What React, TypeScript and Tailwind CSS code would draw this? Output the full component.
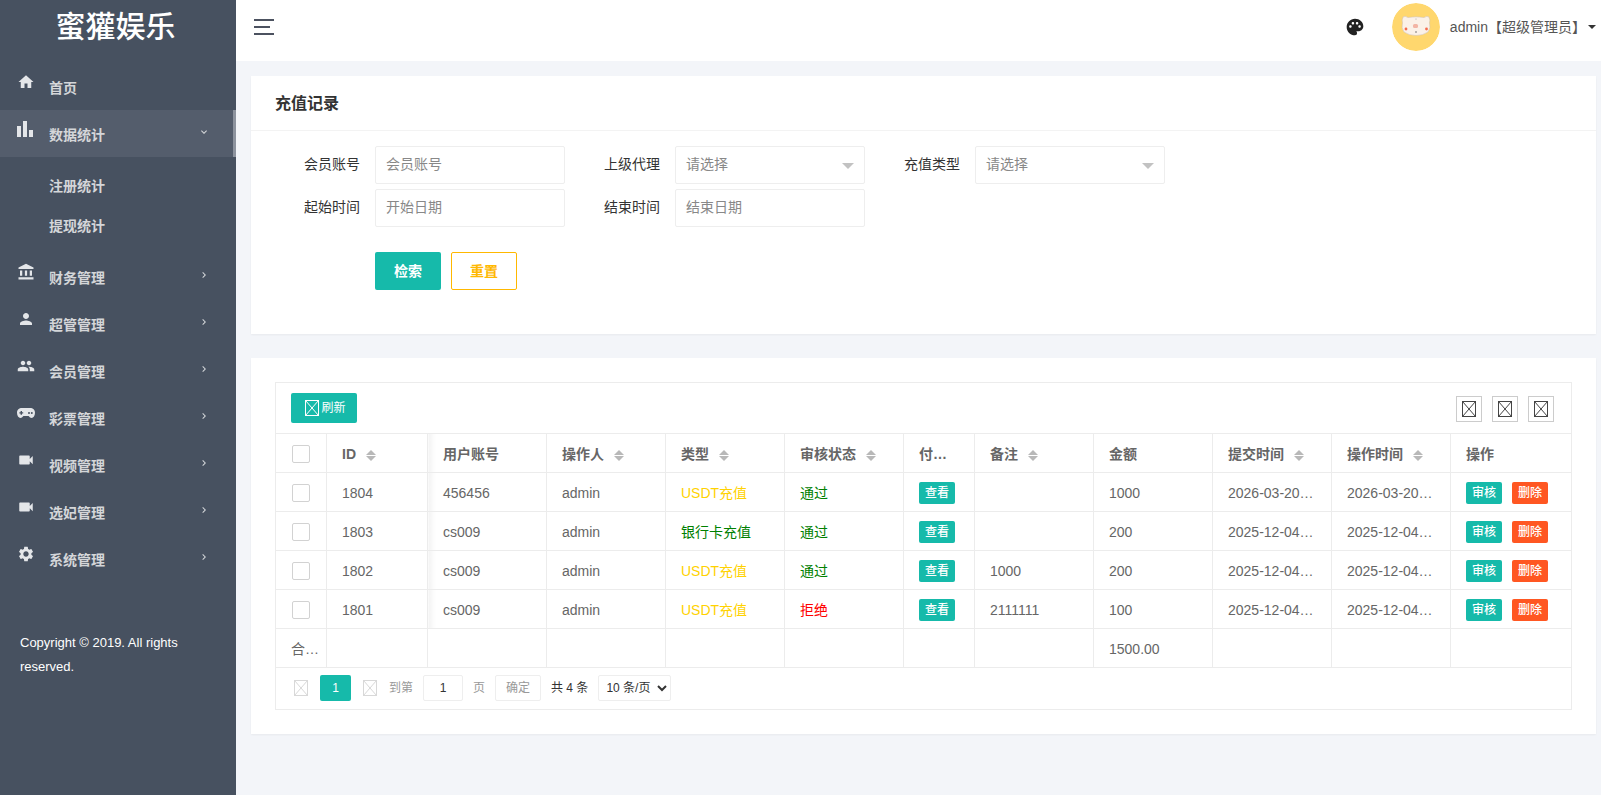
import {
  MdHome,
  MdBarChart,
  MdAccountBalance,
  MdPerson,
  MdPeople,
  MdVideocam,
  MdSettings,
  MdPalette,
  MdKeyboardArrowRight,
  MdKeyboardArrowDown,
} from "react-icons/md";

const font = "font-['Liberation_Sans','Noto_Sans_CJK_SC',sans-serif]";

// broken-image placeholder as the browser draws it
function BrokenImg({ className = "" }: { className?: string }) {
  return (
    <svg viewBox="0 0 14 16" className={`w-[14px] h-[16px] ${className}`} fill="none" stroke="currentColor" strokeWidth="1">
      <rect x="0.5" y="0.5" width="13" height="15" />
      <path d="M0.5 0.5 L13.5 15.5 M13.5 0.5 L0.5 15.5" />
    </svg>
  );
}

function Pig() {
  return (
    <svg viewBox="0 0 48 48" className="w-12 h-12 rounded-full">
      <circle cx="24" cy="24" r="24" fill="#ffd76e" />
      <path
        d="M11 14 Q13 12.5 16 14.5 Q24 13 32 14.5 Q35 12.5 37 14 Q38.5 17 37.5 20 Q39 25 36 29 Q31 32.5 24 32.5 Q17 32.5 12 29 Q9 25 10.5 20 Q9.5 17 11 14Z"
        fill="#fbf1e8"
        stroke="#cdbfb0"
        strokeWidth="0.5"
      />
      <rect x="21" y="21" width="5" height="4" rx="1.5" fill="#f3b5a5" />
      <circle cx="14" cy="26" r="1.4" fill="#f56b4e" />
      <circle cx="34.5" cy="26" r="1.4" fill="#f56b4e" />
      <circle cx="24" cy="29" r="0.8" fill="#666" />
      <circle cx="24" cy="16" r="0.5" fill="#999" />
    </svg>
  );
}

function GamepadIcon() {
  return (
    <svg viewBox="0 0 18 10" className="w-[18px] h-[10px] block" fill="currentColor">
      <path
        fillRule="evenodd"
        d="M5 0 H13 C16 0 18 2 18 4.8 C18 7.8 16.4 10 14.6 10 C13.4 10 12.6 9 11.6 8 H6.4 C5.4 9 4.6 10 3.4 10 C1.6 10 0 7.8 0 4.8 C0 2 2 0 5 0Z M3.6 3 H5 V4.2 H6.2 V5.6 H5 V6.8 H3.6 V5.6 H2.4 V4.2 H3.6Z M12 4 A1 1 0 1 0 12 6 A1 1 0 1 0 12 4Z M14.8 4 A1 1 0 1 0 14.8 6 A1 1 0 1 0 14.8 4Z"
      />
    </svg>
  );
}

function MenuItem({ icon, label, open, active, noArrow }: { icon: React.ReactNode; label: string; open?: boolean; active?: boolean; noArrow?: boolean }) {
  return (
    <div className={`relative h-[47px] pt-[2px] flex items-center pl-[17px] pr-[26px] ${active ? "bg-[#545d6c]" : ""}`}>
      <span className="w-[32px] text-[18px] -mt-[12px] text-[#e4e6e9]">{icon}</span>
      <span className="flex-1 text-sm font-bold text-[#d4d6d9]">{label}</span>
      {!noArrow && <span className="-mt-[6px] text-[#d4d6d9] text-[12px]">{open ? <MdKeyboardArrowDown /> : <MdKeyboardArrowRight />}</span>}
      {active && <span className="absolute right-0 top-0 bottom-0 w-[3px] bg-[#8d939e]" />}
    </div>
  );
}

function Sidebar() {
  return (
    <aside className="w-[236px] shrink-0 bg-[#475160]">
      <div className="h-[63px] pb-[9px] pr-[5px] flex items-center justify-center text-[30px] leading-none font-medium text-white">蜜獾娱乐</div>
      <MenuItem icon={<MdHome />} label="首页" noArrow />
      <MenuItem icon={<MdBarChart className="text-[24px] -ml-[4px]" />} label="数据统计" open active />
      <div className="pt-[9px] pb-[7px]">
        <div className="h-10 pl-[49px] flex items-center text-sm font-bold text-[#d4d6d9]">注册统计</div>
        <div className="h-10 pl-[49px] flex items-center text-sm font-bold text-[#d4d6d9]">提现统计</div>
      </div>
      <MenuItem icon={<MdAccountBalance />} label="财务管理" />
      <MenuItem icon={<MdPerson />} label="超管管理" />
      <MenuItem icon={<MdPeople />} label="会员管理" />
      <MenuItem icon={<GamepadIcon />} label="彩票管理" />
      <MenuItem icon={<MdVideocam />} label="视频管理" />
      <MenuItem icon={<MdVideocam />} label="选妃管理" />
      <MenuItem icon={<MdSettings />} label="系统管理" />
      <p className="mt-[49px] px-5 text-[13px] leading-6 text-white">Copyright © 2019. All rights reserved.</p>
    </aside>
  );
}

function Field({ label, placeholder, select }: { label: string; placeholder: string; select?: boolean }) {
  return (
    <div className="flex items-center w-[300px]">
      <label className="w-[110px] pr-[15px] pb-[2px] text-right text-sm text-[#333]">{label}</label>
      <div className="relative w-[190px] h-[38px] pb-[2px] rounded-[2px] border border-[#eeeeee] flex items-center pl-[10px] text-sm text-[#888]">
        {placeholder}
        {select && <span className="absolute right-[10px] top-[16px] border-x-[6px] border-x-transparent border-t-[6px] border-t-[#c2c2c2]" />}
      </div>
    </div>
  );
}

const columns = [
  { title: "ID", w: 101, sort: true },
  { title: "用户账号", w: 119 },
  { title: "操作人", w: 119, sort: true },
  { title: "类型", w: 119, sort: true },
  { title: "审核状态", w: 119, sort: true },
  { title: "付…", w: 71 },
  { title: "备注", w: 119, sort: true },
  { title: "金额", w: 119 },
  { title: "提交时间", w: 119, sort: true },
  { title: "操作时间", w: 119, sort: true },
  { title: "操作", w: 121 },
];

const rows = [
  { id: 1804, user: "456456", type: "USDT充值", typeColor: "text-[#ffd200]", status: "通过", statusColor: "text-[#008000]", note: "", amount: 1000, sub: "2026-03-20…" },
  { id: 1803, user: "cs009", type: "银行卡充值", typeColor: "text-[#008000]", status: "通过", statusColor: "text-[#008000]", note: "", amount: 200, sub: "2025-12-04…" },
  { id: 1802, user: "cs009", type: "USDT充值", typeColor: "text-[#ffd200]", status: "通过", statusColor: "text-[#008000]", note: "1000", amount: 200, sub: "2025-12-04…" },
  { id: 1801, user: "cs009", type: "USDT充值", typeColor: "text-[#ffd200]", status: "拒绝", statusColor: "text-[#ff0000]", note: "2111111", amount: 100, sub: "2025-12-04…" },
];

const cell = "h-[39px] border border-[#ececec] px-[15px] pt-[2px] text-sm text-[#666] whitespace-nowrap overflow-hidden";
// the frozen column's shadow falls on the cell right of it
const shadowCell = "bg-[linear-gradient(to_right,#f3f3f3,#ffffff_7px)]";

function Checkbox() {
  return <span className="block mx-auto w-[18px] h-[18px] rounded-[2px] border border-[#d2d2d2] bg-white" />;
}

function SortArrows() {
  return (
    <span className="inline-flex flex-col gap-[1px] ml-[10px] align-middle">
      <span className="border-x-[5px] border-x-transparent border-b-[5px] border-b-[#b8b8b8]" />
      <span className="border-x-[5px] border-x-transparent border-t-[5px] border-t-[#b8b8b8]" />
    </span>
  );
}

function SmallBtn({ label, color }: { label: string; color: string }) {
  return <span className={`inline-flex items-center justify-center w-9 h-[22px] rounded-[2px] text-xs font-medium text-white ${color}`}>{label}</span>;
}

function RecordsTable() {
  return (
    <div className="border border-[#ececec]">
      <div className="h-[50px] flex items-center justify-between pl-[15px] pr-[17px]">
        <button className="h-[30px] w-[66px] pl-[3px] rounded-[2px] bg-[#16baaa] flex items-center justify-center gap-[2px] text-xs text-white">
          <BrokenImg />
          刷新
        </button>
        <div className="flex gap-[10px] mt-[2px]">
          {[0, 1, 2].map((i) => (
            <span key={i} className="w-[26px] h-[26px] border border-[#cccccc] flex items-center justify-center text-[#444]">
              <BrokenImg />
            </span>
          ))}
        </div>
      </div>
      <table className="table-fixed w-[1296px] border-collapse -ml-px -mb-px">
        <colgroup>
          <col className="w-[51px]" />
          {columns.map((c) => (
            <col key={c.title} style={{ width: c.w }} />
          ))}
        </colgroup>
        <thead>
          <tr>
            <th className={cell}>
              <Checkbox />
            </th>
            {columns.map((c, i) => (
              <th key={c.title} className={`${cell} text-left font-bold ${i === 1 ? shadowCell : ""}`}>
                {c.title}
                {c.sort && <SortArrows />}
              </th>
            ))}
          </tr>
        </thead>
        <tbody>
          {rows.map((r) => (
            <tr key={r.id}>
              <td className={cell}>
                <Checkbox />
              </td>
              <td className={cell}>{r.id}</td>
              <td className={`${cell} ${shadowCell}`}>{r.user}</td>
              <td className={cell}>admin</td>
              <td className={`${cell} ${r.typeColor}`}>{r.type}</td>
              <td className={`${cell} ${r.statusColor}`}>{r.status}</td>
              <td className={cell}>
                <SmallBtn label="查看" color="bg-[#16baaa]" />
              </td>
              <td className={cell}>{r.note}</td>
              <td className={cell}>{r.amount}</td>
              <td className={cell}>{r.sub}</td>
              <td className={cell}>{r.sub}</td>
              <td className={cell}>
                <span className="flex gap-[10px]">
                  <SmallBtn label="审核" color="bg-[#16baaa]" />
                  <SmallBtn label="删除" color="bg-[#ff5722]" />
                </span>
              </td>
            </tr>
          ))}
          <tr>
            <td className={cell}>合…</td>
            <td className={cell} />
            <td className={cell} />
            <td className={cell} />
            <td className={cell} />
            <td className={cell} />
            <td className={cell} />
            <td className={cell} />
            <td className={cell}>1500.00</td>
            <td className={cell} />
            <td className={cell} />
            <td className={cell} />
          </tr>
        </tbody>
      </table>
      <div className="h-[42px] flex items-center pl-[18px] text-xs">
        <BrokenImg className="text-[#d8d8d8]" />
        <span className="ml-[12px] w-[31px] h-[26px] rounded-[2px] bg-[#16baaa] text-white flex items-center justify-center">1</span>
        <BrokenImg className="ml-[12px] text-[#d8d8d8]" />
        <span className="ml-[12px] text-[#999]">到第</span>
        <span className="ml-[10px] w-10 h-[26px] border border-[#eeeeee] rounded-[2px] flex items-center justify-center text-[#333]">1</span>
        <span className="ml-[10px] text-[#999]">页</span>
        <span className="ml-[10px] w-[46px] h-[26px] border border-[#eeeeee] rounded-[2px] flex items-center justify-center text-[#999]">确定</span>
        <span className="ml-[10px] text-[#333]">共 4 条</span>
        <select className="ml-[10px] w-[73px] h-[26px] border border-[#eeeeee] rounded-[2px] pl-[3px] text-xs text-[#333] bg-white">
          <option>10 条/页</option>
          <option>20 条/页</option>
          <option>30 条/页</option>
        </select>
      </div>
    </div>
  );
}

export default function App() {
  return (
    <div className={`flex min-h-[795px] bg-[#f3f5f9] ${font}`}>
      <Sidebar />
      <main className="flex-1 min-w-0">
        <header className="h-[61px] pb-[7px] bg-white flex items-center pl-[18px] pr-[5px]">
          <span className="flex flex-col gap-[5px]">
            <span className="block w-5 h-[2px] bg-[#4c5260]" />
            <span className="block w-4 h-[2px] bg-[#4c5260]" />
            <span className="block w-5 h-[2px] bg-[#4c5260]" />
          </span>
          <span className="ml-auto text-[20px] text-[#222]">
            <MdPalette />
          </span>
          <span className="ml-[27px]">
            <Pig />
          </span>
          <span className="ml-[10px] text-sm text-[#555]">admin【超级管理员】</span>
          <span className="ml-[2px] border-x-[4px] border-x-transparent border-t-[4px] border-t-[#333]" />
        </header>

        <section className="mt-[15px] ml-[15px] mr-[5px] bg-white shadow-[0_1px_2px_rgba(0,0,0,0.05)]">
          <h2 className="h-[55px] pt-[2px] flex items-center pl-[24px] text-base font-bold text-[#333] border-b border-[#f3f3f3]">充值记录</h2>
          <div className="pl-[14px] pt-[15px] pb-[44px]">
            <div className="flex">
              <Field label="会员账号" placeholder="会员账号" />
              <Field label="上级代理" placeholder="请选择" select />
              <Field label="充值类型" placeholder="请选择" select />
            </div>
            <div className="flex mt-[5px]">
              <Field label="起始时间" placeholder="开始日期" />
              <Field label="结束时间" placeholder="结束日期" />
            </div>
            <div className="flex gap-[10px] pl-[110px] mt-[25px]">
              <button className="w-[66px] h-[38px] rounded-[2px] bg-[#16baaa] text-sm font-bold text-white">检索</button>
              <button className="w-[66px] h-[38px] rounded-[2px] border border-[#ffb800] bg-white text-sm font-bold text-[#ffb800]">重置</button>
            </div>
          </div>
        </section>

        <section className="mt-[24px] ml-[15px] mr-[5px] bg-white p-6 shadow-[0_1px_2px_rgba(0,0,0,0.05)]">
          <RecordsTable />
        </section>
      </main>
    </div>
  );
}
